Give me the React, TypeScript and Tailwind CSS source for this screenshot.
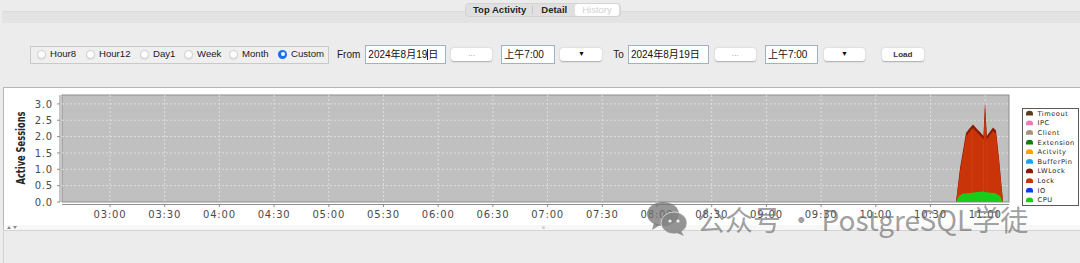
import React from 'react';

const times = ['03:00','03:30','04:00','04:30','05:00','05:30','06:00','06:30','07:00','07:30','08:00','08:30','09:00','09:30','10:00','10:30','11:00'];
const yVals = [0, 0.5, 1.0, 1.5, 2.0, 2.5, 3.0];
const yOf = (v: number) => 202 - 32.7 * v;
const xOf = (k: number) => 110 + k * 54.7;

const legend: [string, string][] = [
  ['Timeout', '#5e3b1c'],
  ['IPC', '#f07ab8'],
  ['Client', '#a6957a'],
  ['Extension', '#137a13'],
  ['Acitvity', '#ffa200'],
  ['BufferPin', '#1aa3ef'],
  ['LWLock', '#8a1c06'],
  ['Lock', '#c93408'],
  ['IO', '#0a3ef0'],
  ['CPU', '#19cc19'],
];

const lwTop: [number, number][] = [
  [956, 202], [960, 168], [966, 133], [969, 129], [973, 124.5], [977, 129], [981, 133], [983.5, 136],
  [985, 102], [986.8, 136], [989, 133], [993, 127.5], [996, 130.5], [999, 158], [1003, 202],
];
const lockTop: [number, number][] = lwTop.map(([x, y], i) => (i === 0 || i === lwTop.length - 1 ? [x, y] : [x, y + 3.5]));
const cpuTop: [number, number][] = [
  [956, 202], [959, 196], [963, 193.5], [970, 193], [977, 192], [983, 191.5], [988, 192.5], [995, 193], [1000, 196], [1003, 202],
];
const pts = (a: [number, number][]) => a.map(([x, y]) => `${x},${y}`).join(' ');

function Chart() {
  return (
    <svg width={1076} height={137} viewBox="4 88 1076 137" className="block">
      <rect x={62} y={95} width={947} height={107} fill="#c0c0c0" stroke="#8d8d8d" strokeWidth={1} />
      {yVals.slice(1).map((v) => (
        <line key={v} x1={62} x2={1009} y1={yOf(v)} y2={yOf(v)} stroke="#e6e6e6" strokeWidth={0.8} strokeDasharray="2 2" />
      ))}
      {times.map((t, k) => (
        <line key={t} x1={xOf(k)} x2={xOf(k)} y1={95} y2={202} stroke="#e6e6e6" strokeWidth={0.8} strokeDasharray="2 2" />
      ))}
      <polygon points={pts(lwTop)} fill="#8a1c06" />
      <polygon points={pts(lockTop)} fill="#c93408" />
      <line x1={972} x2={972} y1={129} y2={202} stroke="#d8441a" strokeWidth={0.6} />
      <line x1={983.5} x2={983.5} y1={140} y2={202} stroke="#d8441a" strokeWidth={0.6} />
      <line x1={987} x2={987} y1={140} y2={202} stroke="#d8441a" strokeWidth={0.6} />
      <polygon points={pts(cpuTop)} fill="#19cc19" />
      <line x1={60} x2={60} y1={95} y2={202} stroke="#8d8d8d" strokeWidth={1} />
      <line x1={62} x2={1009} y1={204.5} y2={204.5} stroke="#8d8d8d" strokeWidth={1} />
      {yVals.map((v) => (
        <g key={v}>
          <line x1={57} x2={60} y1={yOf(v)} y2={yOf(v)} stroke="#8d8d8d" strokeWidth={1} />
          <text x={53} y={yOf(v) + 3.6} textAnchor="end" fontFamily="'DejaVu Sans', sans-serif" fontSize={10} letterSpacing={0.8} fill="#4a4a4a">
            {v.toFixed(1)}
          </text>
        </g>
      ))}
      {times.map((t, k) => (
        <g key={t}>
          <line x1={xOf(k)} x2={xOf(k)} y1={204.5} y2={207} stroke="#8d8d8d" strokeWidth={1} />
          <text x={xOf(k)} y={217.5} textAnchor="middle" fontFamily="'DejaVu Sans', sans-serif" fontSize={10} letterSpacing={0.8} fill="#4a4a4a">
            {t}
          </text>
        </g>
      ))}
      <text
        x={21}
        y={148}
        transform="rotate(-90 21 148)"
        textAnchor="middle"
        dominantBaseline="central"
        fontFamily="'DejaVu Sans Condensed', 'DejaVu Sans', sans-serif"
        fontWeight="bold"
        fontSize={12}
        textLength={73}
        lengthAdjust="spacingAndGlyphs"
        fill="#262626"
      >
        Active Sessions
      </text>
      <rect x={1022.5} y={108.5} width={56} height={97} fill="#ffffff" stroke="#5a5a5a" strokeWidth={1} />
      {legend.map(([name, color], i) => {
        const cy = 113.3 + i * 9.62;
        return (
          <g key={name}>
            <path d={`M1026,${cy + 2.3} L1026,${cy + 0.5} Q1026,${cy - 2.5} 1029.5,${cy - 2.5} Q1033,${cy - 2.5} 1033,${cy + 0.5} L1033,${cy + 2.3} Z`} fill={color} />
            <text x={1037.5} y={cy + 2.4} fontFamily="'DejaVu Sans', sans-serif" fontSize={6.6} letterSpacing={0.55} fill="#222">
              {name}
            </text>
          </g>
        );
      })}
    </svg>
  );
}

function Radio({ label, checked, w }: { label: string; checked?: boolean; w: string }) {
  return (
    <div className={`${w} flex items-center gap-[4px] shrink-0`}>
      {checked ? (
        <span className="w-[9px] h-[9px] rounded-full bg-[#1b6ef3] flex items-center justify-center shrink-0">
          <span className="w-[4px] h-[4px] rounded-full bg-white" />
        </span>
      ) : (
        <span className="w-[9px] h-[9px] rounded-full bg-white border border-[#d0d0d0] shadow-[0_0.5px_1px_rgba(0,0,0,0.12)] shrink-0" />
      )}
      <span className="whitespace-nowrap">{label}</span>
    </div>
  );
}

function Field({ w, text, caret }: { w: string; text: string; caret?: boolean }) {
  return (
    <div className={`${w} h-[19px] bg-white border border-[#9fb1c5] flex items-center pl-[2px] text-[10px] text-[#111]`}>
      {caret ? (
        <>
          <span>2024年8月19</span>
          <span className="w-px h-[11px] bg-[#222]" />
          <span>日</span>
        </>
      ) : (
        <span>{text}</span>
      )}
    </div>
  );
}

function Btn({ children, cls }: { children: React.ReactNode; cls?: string }) {
  return (
    <div className={`h-[13px] bg-white rounded-[3px] shadow-[0_0.5px_1.5px_rgba(0,0,0,0.28)] flex items-center justify-center shrink-0 ${cls ?? ''}`}>
      {children}
    </div>
  );
}

function WeChat() {
  return (
    <svg width={42} height={34} viewBox="0 0 42 34">
      <ellipse cx={17} cy={12} rx={16} ry={12} fill="rgba(115,115,115,0.75)" />
      <path d="M8,21 L6,28 L14,23 Z" fill="rgba(115,115,115,0.75)" />
      <ellipse cx={28} cy={21} rx={13} ry={11} fill="rgba(130,130,130,0.85)" stroke="rgba(255,255,255,0.6)" strokeWidth={1} />
      <path d="M35,29 L38,34 L31,31 Z" fill="rgba(130,130,130,0.85)" />
      <circle cx={24} cy={19} r={1.6} fill="rgba(255,255,255,0.85)" />
      <circle cx={32} cy={19} r={1.6} fill="rgba(255,255,255,0.85)" />
    </svg>
  );
}

export default function App() {
  return (
    <div className="relative w-[1080px] h-[263px] overflow-hidden bg-[#ececec] flex flex-col font-['Liberation_Sans','Noto_Sans_CJK_SC',sans-serif]">
      {/* tab band */}
      <div className="mt-[11px] ml-[2px] h-[12px] bg-[#e3e3e3] border-t border-[#dadada] rounded-tl-[3px]" />

      {/* controls */}
      <div className="h-[64px] pt-[22px] pl-[30px]">
        <div className="flex items-center h-[19px] text-[10px] text-[#1a1a1a]">
          <div className="w-[299px] h-[18px] border border-[#c9c9c9] bg-[#efefef] flex items-center pl-[6px] text-[9.6px] shrink-0">
            <Radio w="w-[49px]" label="Hour8" />
            <Radio w="w-[54px]" label="Hour12" />
            <Radio w="w-[44px]" label="Day1" />
            <Radio w="w-[45px]" label="Week" />
            <Radio w="w-[49px]" label="Month" />
            <Radio w="w-[48px]" label="Custom" checked />
          </div>
          <span className="ml-[8px]">From</span>
          <div className="ml-[5px]"><Field w="w-[81px]" text="" caret /></div>
          <Btn cls="ml-[5px] w-[41px] text-[7px] tracking-[0.5px] text-[#777]">...</Btn>
          <div className="ml-[9px]"><Field w="w-[54px]" text="上午7:00" /></div>
          <Btn cls="ml-[5px] w-[42px] text-[7px] text-[#111]">▼</Btn>
          <span className="ml-[11px]">To</span>
          <div className="ml-[4px]"><Field w="w-[81px]" text="2024年8月19日" /></div>
          <Btn cls="ml-[6px] w-[41px] text-[7px] tracking-[0.5px] text-[#777]">...</Btn>
          <div className="ml-[9px]"><Field w="w-[53px]" text="上午7:00" /></div>
          <Btn cls="ml-[6px] w-[41px] text-[7px] text-[#111]">▼</Btn>
          <Btn cls="ml-[17px] w-[42px] text-[8px] font-semibold text-[#333]">Load</Btn>
        </div>
      </div>

      {/* chart */}
      <div className="ml-[3px] h-[138px] border-t border-l border-[#b5b5b5] bg-white">
        <Chart />
      </div>

      {/* splitter */}
      <div className="ml-[3px] h-[5px] border-l border-[#c4c4c4] bg-[#f7f7f7] flex items-center">
        <svg width={14} height={5} viewBox="0 0 14 5" className="ml-[1px]">
          <path d="M2,4 L4,1 L6,4 Z" fill="#8a8a8a" />
          <path d="M8,1 L12,1 L10,4 Z" fill="#8a8a8a" />
        </svg>
        <span className="ml-[523px] w-[3px] h-[3px] rounded-full bg-[#cfcfcf]" />
      </div>

      {/* bottom */}
      <div className="ml-[3px] flex-1 border-l border-t border-[#d4d4d4] bg-[#ececec]" />

      {/* segmented tabs */}
      <div className="absolute left-[465px] top-[3px] h-[14px] w-[156px] rounded-[4px] bg-[#e0e0e0] border border-[#d3d3d3] flex items-center text-[9.5px] font-semibold text-[#262626] font-['Liberation_Sans',sans-serif]">
        <span className="ml-[7px]">Top Activity</span>
        <span className="ml-[6px] w-px h-[8px] bg-[#c4c4c4]" />
        <span className="ml-[8px]">Detail</span>
        <span className="ml-auto mr-[1px] h-[12px] w-[44px] bg-white rounded-[3px] flex items-center justify-center text-[#d2d2d2] font-normal">History</span>
      </div>

      {/* watermark */}
      <div className="absolute left-[646px] top-[202px] flex items-center pointer-events-none">
        <WeChat />
        <span className="ml-[9px] text-[28px] leading-none text-[rgba(105,105,105,0.65)] font-['Noto_Sans_CJK_SC','Noto_Sans',sans-serif] whitespace-pre">
          公众号 · PostgreSQL学徒
        </span>
      </div>
    </div>
  );
}
